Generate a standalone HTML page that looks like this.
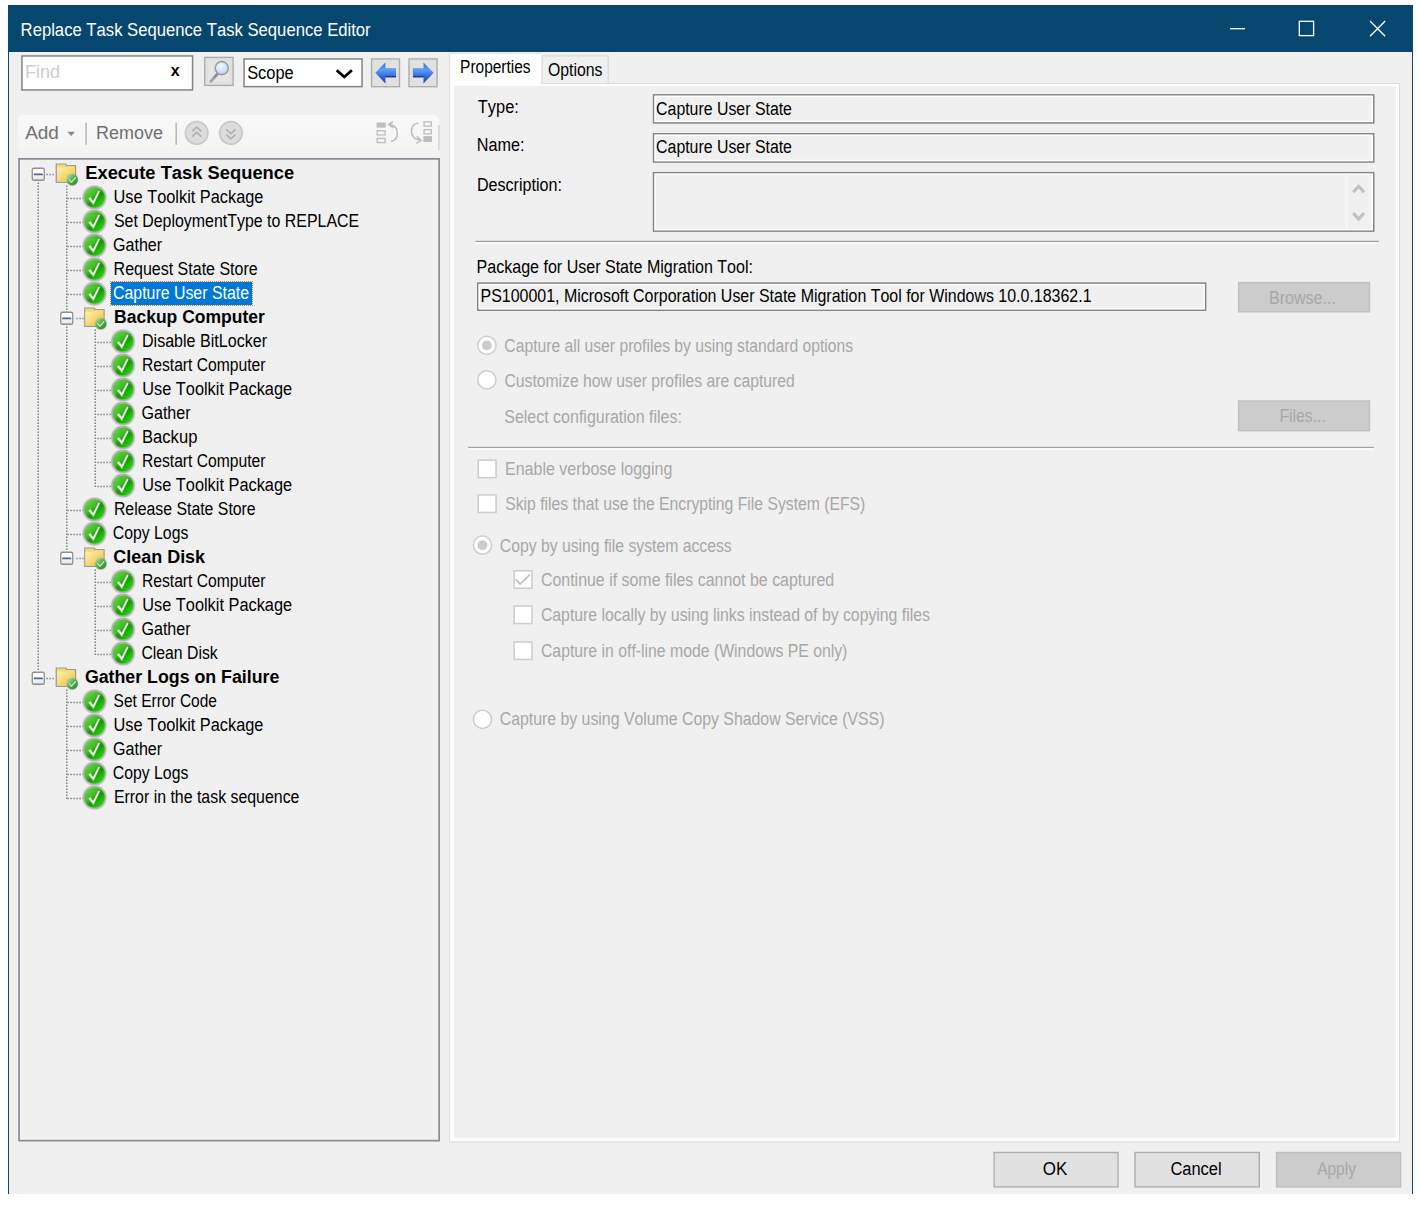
<!DOCTYPE html>
<html><head><meta charset="utf-8"><title>Replace Task Sequence Task Sequence Editor</title>
<style>
*{box-sizing:border-box;margin:0;padding:0}
html,body{width:1420px;height:1207px;background:#fff;overflow:hidden}
body{font-family:"Liberation Sans",sans-serif;font-size:17px;color:#000;position:relative}
.abs,.t,.ck,.dv,.dh,.sel{position:absolute}
.t{left:0;top:0;white-space:nowrap;height:24px;line-height:24px;font-size:18px;transform-origin:0 0;font-kerning:none}
.t.b{font-weight:bold}
.t.w{color:#fff}
.t.d{color:#a7a7a7}
.t.f{color:#cdcdcd}
.t.g{color:#707070}
#win{position:absolute;left:8px;top:5px;width:1405px;height:1189px;background:#f0f0f0;border-left:1px solid #0b4570;border-right:1px solid #0b4570}
#title{position:absolute;left:8px;top:5px;width:1405px;height:47px;background:#06466f}
.dv{width:2px;background:repeating-linear-gradient(to bottom,rgba(105,105,105,.64) 0,rgba(105,105,105,.64) 2px,transparent 2px,transparent 3px)}
.dh{height:2px;background:repeating-linear-gradient(to right,rgba(105,105,105,.64) 0,rgba(105,105,105,.64) 2px,transparent 2px,transparent 3px)}
.sel{background:#0078d7}
#ov{position:absolute;left:0;top:0}
</style></head><body>
<svg width="0" height="0" style="position:absolute">
<defs>
<linearGradient id="gg" x1="0.1" y1="0.1" x2="0.9" y2="0.9"><stop offset="0" stop-color="#5fd83c"/><stop offset=".38" stop-color="#43ba28"/><stop offset=".56" stop-color="#18930a"/><stop offset=".78" stop-color="#1dc004"/><stop offset="1" stop-color="#2ad808"/></linearGradient>
<linearGradient id="gg2" x1="0.1" y1="0.1" x2="0.9" y2="0.9"><stop offset="0" stop-color="#9ee09a"/><stop offset=".5" stop-color="#4daa4a"/><stop offset="1" stop-color="#2f8f2f"/></linearGradient>
<linearGradient id="fg" x1="0" y1="0" x2="1" y2="1"><stop offset="0" stop-color="#fbf3b4"/><stop offset=".45" stop-color="#f6de80"/><stop offset="1" stop-color="#edbb35"/></linearGradient>
<linearGradient id="ab" x1="0" y1="0" x2="0" y2="1"><stop offset="0" stop-color="#2f6ee0"/><stop offset=".35" stop-color="#5f9cf2"/><stop offset=".7" stop-color="#2a66d6"/><stop offset="1" stop-color="#1a44b0"/></linearGradient>
<linearGradient id="eb" x1="0" y1="0" x2="0" y2="1"><stop offset=".4" stop-color="#fff"/><stop offset="1" stop-color="#e2e2e2"/></linearGradient>
<radialGradient id="mg" cx="40%" cy="35%" r="70%"><stop offset="0" stop-color="#f4f9ff"/><stop offset=".6" stop-color="#cfe1f7"/><stop offset="1" stop-color="#bcd3f0"/></radialGradient>
<linearGradient id="tb" x1="0" y1="0" x2="0" y2="1"><stop offset="0" stop-color="#f8f8f8"/><stop offset=".75" stop-color="#f4f4f4"/><stop offset="1" stop-color="#f0f0f0"/></linearGradient>
<g id="ckI"><circle cx="12" cy="12" r="12.2" fill="#c6c6c6"/><circle cx="12" cy="12" r="11.4" fill="#b4b4b4"/><circle cx="12" cy="12" r="10.2" fill="url(#gg)"/><path d="M6.1 13.3 L7.9 11.9 L10.5 15.700 L16.1 5.300 L17.2 5.900 L10.9 19 Z" fill="#eff2ed" stroke="#eff2ed" stroke-width=".45" stroke-linejoin="round"/></g>
<g id="fdI"><path d="M.9 1.3 H10.5 L11 2.9 H20.100 V19.6 H.9 Z" fill="#f3d66e" stroke="#9f9b90" stroke-width="1.35"/><path d="M1.5 4.600 H10.6 L11.2 3.5 H19.5 V19 H1.5 Z" fill="url(#fg)"/><path d="M1.5 1.9 H10 V3.600 H1.5Z" fill="#f7dc6e"/><circle cx="16.9" cy="17" r="6.3" fill="#8c8c8c" fill-opacity=".3"/><circle cx="16.9" cy="17" r="5.6" fill="url(#gg2)"/><path d="M13.9 17.100 L16 19.3 L20 14.800" fill="none" stroke="#cfeacc" stroke-width="1.35" stroke-linecap="round" stroke-linejoin="round"/></g>
<g id="exI"><rect x=".65" y=".65" width="12" height="12" rx="1.6" fill="url(#eb)" stroke="#8e8e8e" stroke-width="1.3"/><path d="M2.900 6.800 H10.400" stroke="#4a62b0" stroke-width="1.8" stroke-linecap="round"/></g>
</defs></svg>

<div id="win"></div>
<div id="title"></div>
<!--WL-->
<!-- fills -->
<div class="abs" style="left:18px;top:115px;width:421px;height:43px;background:linear-gradient(#f8f8f8,#f5f5f5 70%,#f1f1f1);border-radius:5px 5px 0 0"></div>
<div class="abs" style="left:450px;top:83px;width:949px;height:1058px;background:#fff"></div>
<div class="abs" style="left:450px;top:53px;width:92px;height:33px;background:#fff"></div>
<div class="abs" style="left:454px;top:86px;width:942px;height:1052px;background:#f0f0f0"></div>
<div class="abs" style="left:542px;top:56px;width:67px;height:27px;background:#f0f0f0"></div>
<div class="abs" style="left:22px;top:56px;width:171px;height:34px;background:#fff"></div>
<div class="abs" style="left:244px;top:59px;width:118px;height:28px;background:#fff"></div>
<div class="sel" style="left:111px;top:282px;width:141px;height:23px;outline:1px dotted #c9822f;outline-offset:0"></div>

<svg id="ov" width="1420" height="1207" viewBox="0 0 1420 1207">
<g stroke="#fff" fill="none" stroke-width="1.3"><path d="M1230 28.7 H1245"/><rect x="1299.3" y="21.3" width="14.3" height="14.3"/><path d="M1370 21 L1385.200 36.200 M1385.200 21 L1370 36.200"/></g>
<rect x="21.95" y="55.95" width="170.6" height="34" fill="none" stroke="#858585" stroke-width="1.5"/>
<rect x="244.05" y="58.95" width="118" height="27.7" fill="none" stroke="#858585" stroke-width="1.5"/>
<path d="M336.700 70.300 L344.300 77 L351.900 70.300" fill="none" stroke="#000" stroke-width="2.8"/>
<rect x="204.7" y="57.4" width="28.4" height="28" fill="#e1e1e1" stroke="#adadad" stroke-width="1.4"/>
<rect x="208.800" y="61.100" width="20.600" height="20.600" fill="#e6e6e6"/>
<path d="M210.900 81.200 L217.400 74" stroke="#a4a4a4" stroke-width="3" stroke-linecap="round"/><path d="M214.500 77.200 L217.800 73.600" stroke="#8f8f8f" stroke-width="2" stroke-linecap="round"/>
<circle cx="221.800" cy="68.100" r="6.600" fill="url(#mg)" stroke="#9c9c9c" stroke-width="1.5"/>
<rect x="371.6" y="58.9" width="27.9" height="27.8" fill="#e1e1e1" stroke="#adadad" stroke-width="1.4"/>
<rect x="409" y="58.9" width="28.1" height="27.8" fill="#e1e1e1" stroke="#adadad" stroke-width="1.4"/>
<path d="M375.300 72.800 L385.400 62.500 V68.200 H396 V77.200 H385.400 V83.400 Z" fill="url(#ab)"/><path d="M385.400 76.700 H396" stroke="#16347e" stroke-width="1.2"/>
<path d="M433.600 72.800 L423.500 62.500 V68.200 H412.900 V77.200 H423.500 V83.400 Z" fill="url(#ab)"/><path d="M412.900 76.700 H423.500" stroke="#16347e" stroke-width="1.2"/>
<path d="M67.300 131.700 H75 L71.150 136.100 Z" fill="#8a8a8a"/>
<path d="M86.100 122.800 V144.800 M176.200 122.800 V144.800" stroke="#b6b6b6" stroke-width="1.5"/>
<circle cx="196.7" cy="132.900" r="11.300" fill="#dcdcdc" stroke="#c6c6c6" stroke-width="1.5"/>
<path d="M192.1 131.400 l4.600 -4.200 l4.600 4.200 M192.1 136.600 l4.600 -4.200 l4.600 4.200" fill="none" stroke="#b0b0b0" stroke-width="1.6"/>
<circle cx="230.9" cy="132.900" r="11.300" fill="#dcdcdc" stroke="#c6c6c6" stroke-width="1.5"/>
<path d="M226.3 129.400 l4.600 4.200 l4.600 -4.200 M226.3 134.600 l4.600 4.200 l4.600 -4.200" fill="none" stroke="#b0b0b0" stroke-width="1.6"/>
<g fill="none" stroke="#bdbdbd" stroke-width="1.3"><rect x="377.200" y="123.200" width="7.900" height="3.800" fill="#bdbdbd"/><rect x="377.200" y="130.800" width="7.900" height="4.200"/><rect x="377.200" y="138.400" width="7.900" height="4.200"/><path d="M391 141.200 q6.300 -0.500 6.300 -8.500 q0 -7 -8 -8.200 M392.800 121.600 l-4.200 3 l4.600 3.200" stroke-width="1.5"/><rect x="424" y="121.900" width="7.300" height="4.200"/><rect x="424" y="129.700" width="7.300" height="4.200"/><rect x="424" y="136.800" width="7.300" height="4.500" fill="#bdbdbd"/><path d="M418.300 122.900 q-6.800 .8 -6.800 8.500 q0 6.800 8 8.600 M416.800 136.400 l4.200 3.900 l-4.500 3" stroke-width="1.5"/></g>
<path d="M438.900 125 V150" stroke="#cfcfcf" stroke-width="1.3"/>
<rect x="19.05" y="158.85" width="420.1" height="981.8" fill="none" stroke="#878c96" stroke-width="1.7"/>
<path d="M541.600 83.500 H1399.500 V1142 H449.600 V53.300 H541.400" fill="none" stroke="#dcdcdc" stroke-width="1"/>
<path d="M542 83 V55.900 H608.200 V83" fill="none" stroke="#d9d9d9" stroke-width="1.2"/>
<rect x="653.6" y="94.9" width="720.1" height="28" fill="#f0f0f0" stroke="#868686" stroke-width="1.6"/><rect x="655.1" y="96.4" width="717.1" height="25" fill="none" stroke="#fff" stroke-width="1.4"/>
<rect x="653.6" y="133.8" width="720.1" height="28.2" fill="#f0f0f0" stroke="#868686" stroke-width="1.6"/><rect x="655.1" y="135.3" width="717.1" height="25.2" fill="none" stroke="#fff" stroke-width="1.4"/>
<rect x="653.6" y="172.7" width="720.1" height="58.4" fill="#f0f0f0" stroke="#868686" stroke-width="1.6"/><rect x="655.1" y="174.2" width="717.1" height="55.4" fill="none" stroke="#fff" stroke-width="1.4"/>
<path d="M1346.700 175 V229" stroke="#fbfbfb" stroke-width="1.2"/>
<path d="M1353.300 192.300 L1358.600 186.300 L1364 192.300 M1353.300 213.100 L1358.600 219.100 L1364 213.100" fill="none" stroke="#c1c1c1" stroke-width="3.200"/>
<path d="M475.5 241.4 H1378.8" stroke="#a2a2a2" stroke-width="1.5"/><path d="M475.5 242.9 H1378.8" stroke="#fff" stroke-width="1.5"/>
<rect x="477.8" y="283.1" width="727.8" height="27.1" fill="#f0f0f0" stroke="#868686" stroke-width="1.6"/><rect x="479.3" y="284.6" width="724.8" height="24.1" fill="none" stroke="#fff" stroke-width="1.4"/>
<rect x="1238.6" y="282.6" width="130.9" height="29.2" fill="#cccccc" stroke="#bfbfbf" stroke-width="1.4"/>
<rect x="1238.6" y="401" width="130.9" height="29.7" fill="#cccccc" stroke="#bfbfbf" stroke-width="1.4"/>
<path d="M468 447.4 H1373.8" stroke="#a2a2a2" stroke-width="1.5"/><path d="M468 448.9 H1373.8" stroke="#fff" stroke-width="1.5"/>
<circle cx="486.9" cy="345.4" r="9.1" fill="#fff" stroke="#cdcdcd" stroke-width="1.5"/><circle cx="486.9" cy="345.4" r="4.9" fill="#cbcbcb"/>
<circle cx="486.9" cy="379.9" r="9.1" fill="#fff" stroke="#cdcdcd" stroke-width="1.5"/>
<rect x="478.25" y="460.15" width="17.8" height="17.5" fill="#fff" stroke="#cccccc" stroke-width="1.5"/>
<rect x="478.25" y="494.95" width="17.8" height="17.5" fill="#fff" stroke="#cccccc" stroke-width="1.5"/>
<circle cx="482.5" cy="545.2" r="9.1" fill="#fff" stroke="#cdcdcd" stroke-width="1.5"/><circle cx="482.5" cy="545.2" r="4.9" fill="#cbcbcb"/>
<circle cx="482.5" cy="719.4" r="9.1" fill="#fff" stroke="#cdcdcd" stroke-width="1.5"/>
<rect x="514.15" y="570.75" width="17.8" height="17.5" fill="#fff" stroke="#cccccc" stroke-width="1.5"/><path d="M515.9 579.2 L520.1 584.1 L529.8 574.6" fill="none" stroke="#bdbdbd" stroke-width="1.6"/>
<rect x="514.15" y="606.05" width="17.8" height="17.5" fill="#fff" stroke="#cccccc" stroke-width="1.5"/>
<rect x="514.15" y="641.95" width="17.8" height="17.5" fill="#fff" stroke="#cccccc" stroke-width="1.5"/>
<rect x="994.1" y="1152.5" width="123.9" height="34.4" fill="#e1e1e1" stroke="#adadad" stroke-width="1.4"/>
<rect x="1135" y="1152.5" width="124.3" height="34.4" fill="#e1e1e1" stroke="#adadad" stroke-width="1.4"/>
<rect x="1276.5" y="1152.5" width="124.1" height="34.4" fill="#cccccc" stroke="#bfbfbf" stroke-width="1.4"/>
<path d="M38.25 182.4 V671.4" stroke="#6f6f6f" stroke-opacity=".85" stroke-width="1.5" stroke-dasharray="1.5 1.5" stroke-dashoffset="2.95"/>
<path d="M66.75 185.4 V551.4" stroke="#6f6f6f" stroke-opacity=".85" stroke-width="1.5" stroke-dasharray="1.5 1.5" stroke-dashoffset="2.95"/>
<path d="M95.25 329.4 V487.2" stroke="#6f6f6f" stroke-opacity=".85" stroke-width="1.5" stroke-dasharray="1.5 1.5" stroke-dashoffset="2.95"/>
<path d="M95.25 569.4 V655.2" stroke="#6f6f6f" stroke-opacity=".85" stroke-width="1.5" stroke-dasharray="1.5 1.5" stroke-dashoffset="2.95"/>
<path d="M66.75 689.4 V799.2" stroke="#6f6f6f" stroke-opacity=".85" stroke-width="1.5" stroke-dasharray="1.5 1.5" stroke-dashoffset="2.95"/>
<path d="M46.3 174.4 H55.2" stroke="#6f6f6f" stroke-opacity=".85" stroke-width="1.5" stroke-dasharray="1.5 1.5" stroke-dashoffset="2.95"/>
<use href="#exI" x="31.6" y="167.6"/>
<use href="#fdI" x="55.4" y="162.8"/>
<path d="M67.5 198.4 H83.35" stroke="#6f6f6f" stroke-opacity=".85" stroke-width="1.5" stroke-dasharray="1.5 1.5" stroke-dashoffset="0.15"/>
<use href="#ckI" x="82.55" y="185.5"/>
<path d="M67.5 222.4 H83.35" stroke="#6f6f6f" stroke-opacity=".85" stroke-width="1.5" stroke-dasharray="1.5 1.5" stroke-dashoffset="0.15"/>
<use href="#ckI" x="82.55" y="209.5"/>
<path d="M67.5 246.4 H83.35" stroke="#6f6f6f" stroke-opacity=".85" stroke-width="1.5" stroke-dasharray="1.5 1.5" stroke-dashoffset="0.15"/>
<use href="#ckI" x="82.55" y="233.5"/>
<path d="M67.5 270.4 H83.35" stroke="#6f6f6f" stroke-opacity=".85" stroke-width="1.5" stroke-dasharray="1.5 1.5" stroke-dashoffset="0.15"/>
<use href="#ckI" x="82.55" y="257.5"/>
<path d="M67.5 294.4 H83.35" stroke="#6f6f6f" stroke-opacity=".85" stroke-width="1.5" stroke-dasharray="1.5 1.5" stroke-dashoffset="0.15"/>
<use href="#ckI" x="82.55" y="281.5"/>
<path d="M74.8 318.4 H83.7" stroke="#6f6f6f" stroke-opacity=".85" stroke-width="1.5" stroke-dasharray="1.5 1.5" stroke-dashoffset="1.45"/>
<use href="#exI" x="60.1" y="311.6"/>
<use href="#fdI" x="83.9" y="306.8"/>
<path d="M96 342.4 H111.85" stroke="#6f6f6f" stroke-opacity=".85" stroke-width="1.5" stroke-dasharray="1.5 1.5" stroke-dashoffset="1.65"/>
<use href="#ckI" x="111.05" y="329.5"/>
<path d="M96 366.4 H111.85" stroke="#6f6f6f" stroke-opacity=".85" stroke-width="1.5" stroke-dasharray="1.5 1.5" stroke-dashoffset="1.65"/>
<use href="#ckI" x="111.05" y="353.5"/>
<path d="M96 390.4 H111.85" stroke="#6f6f6f" stroke-opacity=".85" stroke-width="1.5" stroke-dasharray="1.5 1.5" stroke-dashoffset="1.65"/>
<use href="#ckI" x="111.05" y="377.5"/>
<path d="M96 414.4 H111.85" stroke="#6f6f6f" stroke-opacity=".85" stroke-width="1.5" stroke-dasharray="1.5 1.5" stroke-dashoffset="1.65"/>
<use href="#ckI" x="111.05" y="401.5"/>
<path d="M96 438.4 H111.85" stroke="#6f6f6f" stroke-opacity=".85" stroke-width="1.5" stroke-dasharray="1.5 1.5" stroke-dashoffset="1.65"/>
<use href="#ckI" x="111.05" y="425.5"/>
<path d="M96 462.4 H111.85" stroke="#6f6f6f" stroke-opacity=".85" stroke-width="1.5" stroke-dasharray="1.5 1.5" stroke-dashoffset="1.65"/>
<use href="#ckI" x="111.05" y="449.5"/>
<path d="M96 486.4 H111.85" stroke="#6f6f6f" stroke-opacity=".85" stroke-width="1.5" stroke-dasharray="1.5 1.5" stroke-dashoffset="1.65"/>
<use href="#ckI" x="111.05" y="473.5"/>
<path d="M67.5 510.4 H83.35" stroke="#6f6f6f" stroke-opacity=".85" stroke-width="1.5" stroke-dasharray="1.5 1.5" stroke-dashoffset="0.15"/>
<use href="#ckI" x="82.55" y="497.5"/>
<path d="M67.5 534.4 H83.35" stroke="#6f6f6f" stroke-opacity=".85" stroke-width="1.5" stroke-dasharray="1.5 1.5" stroke-dashoffset="0.15"/>
<use href="#ckI" x="82.55" y="521.5"/>
<path d="M74.8 558.4 H83.7" stroke="#6f6f6f" stroke-opacity=".85" stroke-width="1.5" stroke-dasharray="1.5 1.5" stroke-dashoffset="1.45"/>
<use href="#exI" x="60.1" y="551.6"/>
<use href="#fdI" x="83.9" y="546.8"/>
<path d="M96 582.4 H111.85" stroke="#6f6f6f" stroke-opacity=".85" stroke-width="1.5" stroke-dasharray="1.5 1.5" stroke-dashoffset="1.65"/>
<use href="#ckI" x="111.05" y="569.5"/>
<path d="M96 606.4 H111.85" stroke="#6f6f6f" stroke-opacity=".85" stroke-width="1.5" stroke-dasharray="1.5 1.5" stroke-dashoffset="1.65"/>
<use href="#ckI" x="111.05" y="593.5"/>
<path d="M96 630.4 H111.85" stroke="#6f6f6f" stroke-opacity=".85" stroke-width="1.5" stroke-dasharray="1.5 1.5" stroke-dashoffset="1.65"/>
<use href="#ckI" x="111.05" y="617.5"/>
<path d="M96 654.4 H111.85" stroke="#6f6f6f" stroke-opacity=".85" stroke-width="1.5" stroke-dasharray="1.5 1.5" stroke-dashoffset="1.65"/>
<use href="#ckI" x="111.05" y="641.5"/>
<path d="M46.3 678.4 H55.2" stroke="#6f6f6f" stroke-opacity=".85" stroke-width="1.5" stroke-dasharray="1.5 1.5" stroke-dashoffset="2.95"/>
<use href="#exI" x="31.6" y="671.6"/>
<use href="#fdI" x="55.4" y="666.8"/>
<path d="M67.5 702.4 H83.35" stroke="#6f6f6f" stroke-opacity=".85" stroke-width="1.5" stroke-dasharray="1.5 1.5" stroke-dashoffset="0.15"/>
<use href="#ckI" x="82.55" y="689.5"/>
<path d="M67.5 726.4 H83.35" stroke="#6f6f6f" stroke-opacity=".85" stroke-width="1.5" stroke-dasharray="1.5 1.5" stroke-dashoffset="0.15"/>
<use href="#ckI" x="82.55" y="713.5"/>
<path d="M67.5 750.4 H83.35" stroke="#6f6f6f" stroke-opacity=".85" stroke-width="1.5" stroke-dasharray="1.5 1.5" stroke-dashoffset="0.15"/>
<use href="#ckI" x="82.55" y="737.5"/>
<path d="M67.5 774.4 H83.35" stroke="#6f6f6f" stroke-opacity=".85" stroke-width="1.5" stroke-dasharray="1.5 1.5" stroke-dashoffset="0.15"/>
<use href="#ckI" x="82.55" y="761.5"/>
<path d="M67.5 798.4 H83.35" stroke="#6f6f6f" stroke-opacity=".85" stroke-width="1.5" stroke-dasharray="1.5 1.5" stroke-dashoffset="0.15"/>
<use href="#ckI" x="82.55" y="785.5"/>
</svg>

<div class="t b" style="transform:translate(85.20px,160.70px) scaleX(1.0190)">Execute Task Sequence</div>
<div class="t" style="transform:translate(113.56px,184.70px) scaleX(0.9081)">Use Toolkit Package</div>
<div class="t" style="transform:translate(113.92px,208.70px) scaleX(0.8848)">Set DeploymentType to REPLACE</div>
<div class="t" style="transform:translate(113.05px,232.70px) scaleX(0.8915)">Gather</div>
<div class="t" style="transform:translate(113.58px,256.70px) scaleX(0.8889)">Request State Store</div>
<div class="t w" style="transform:translate(113.03px,280.70px) scaleX(0.8823)">Capture User State</div>
<div class="t b" style="transform:translate(114.04px,304.70px) scaleX(0.9728)">Backup Computer</div>
<div class="t" style="transform:translate(141.98px,328.70px) scaleX(0.8925)">Disable BitLocker</div>
<div class="t" style="transform:translate(141.94px,352.70px) scaleX(0.8698)">Restart Computer</div>
<div class="t" style="transform:translate(142.19px,376.70px) scaleX(0.9083)">Use Toolkit Package</div>
<div class="t" style="transform:translate(141.47px,400.70px) scaleX(0.8926)">Gather</div>
<div class="t" style="transform:translate(141.94px,424.70px) scaleX(0.9232)">Backup</div>
<div class="t" style="transform:translate(141.94px,448.70px) scaleX(0.8698)">Restart Computer</div>
<div class="t" style="transform:translate(142.19px,472.70px) scaleX(0.9083)">Use Toolkit Package</div>
<div class="t" style="transform:translate(113.92px,496.70px) scaleX(0.8800)">Release State Store</div>
<div class="t" style="transform:translate(112.86px,520.70px) scaleX(0.8768)">Copy Logs</div>
<div class="t b" style="transform:translate(113.31px,544.70px) scaleX(0.9971)">Clean Disk</div>
<div class="t" style="transform:translate(141.94px,568.70px) scaleX(0.8698)">Restart Computer</div>
<div class="t" style="transform:translate(142.19px,592.70px) scaleX(0.9083)">Use Toolkit Package</div>
<div class="t" style="transform:translate(141.47px,616.70px) scaleX(0.8926)">Gather</div>
<div class="t" style="transform:translate(141.38px,640.70px) scaleX(0.8770)">Clean Disk</div>
<div class="t b" style="transform:translate(84.88px,664.70px) scaleX(0.9869)">Gather Logs on Failure</div>
<div class="t" style="transform:translate(113.59px,688.70px) scaleX(0.8608)">Set Error Code</div>
<div class="t" style="transform:translate(113.56px,712.70px) scaleX(0.9081)">Use Toolkit Package</div>
<div class="t" style="transform:translate(113.05px,736.70px) scaleX(0.8915)">Gather</div>
<div class="t" style="transform:translate(112.86px,760.70px) scaleX(0.8768)">Copy Logs</div>
<div class="t" style="transform:translate(113.90px,784.70px) scaleX(0.8830)">Error in the task sequence</div>
<div class="t w" style="transform:translate(20.61px,17.80px) scaleX(0.9255)">Replace Task Sequence Task Sequence Editor</div>
<div class="t f" style="transform:translate(25.03px,59.50px) scaleX(0.9987)">Find</div>
<div class="t" style="transform:translate(247.16px,60.70px) scaleX(0.9119)">Scope</div>
<div class="t g" style="transform:translate(25.19px,121.20px) scaleX(1.0529)">Add</div>
<div class="t g" style="transform:translate(96.11px,121.20px) scaleX(0.9988)">Remove</div>
<div class="t" style="transform:translate(460.08px,54.50px) scaleX(0.8596)">Properties</div>
<div class="t" style="transform:translate(547.91px,57.90px) scaleX(0.8786)">Options</div>
<div class="t" style="transform:translate(477.85px,95.40px) scaleX(0.9095)">Type:</div>
<div class="t" style="transform:translate(476.85px,132.80px) scaleX(0.8991)">Name:</div>
<div class="t" style="transform:translate(476.91px,172.80px) scaleX(0.8952)">Description:</div>
<div class="t" style="transform:translate(656.09px,96.60px) scaleX(0.8818)">Capture User State</div>
<div class="t" style="transform:translate(656.09px,135.40px) scaleX(0.8818)">Capture User State</div>
<div class="t" style="transform:translate(476.56px,254.50px) scaleX(0.8913)">Package for User State Migration Tool:</div>
<div class="t" style="transform:translate(480.55px,284.10px) scaleX(0.8863)">PS100001, Microsoft Corporation User State Migration Tool for Windows 10.0.18362.1</div>
<div class="t d" style="transform:translate(1268.90px,285.90px) scaleX(0.8935)">Browse...</div>
<div class="t d" style="transform:translate(1279.46px,404.40px) scaleX(0.8757)">Files...</div>
<div class="t d" style="transform:translate(504.37px,334.00px) scaleX(0.8712)">Capture all user profiles by using standard options</div>
<div class="t d" style="transform:translate(504.39px,368.50px) scaleX(0.8744)">Customize how user profiles are captured</div>
<div class="t d" style="transform:translate(504.26px,404.60px) scaleX(0.8879)">Select configuration files:</div>
<div class="t d" style="transform:translate(505.00px,457.00px) scaleX(0.8893)">Enable verbose logging</div>
<div class="t d" style="transform:translate(505.27px,491.60px) scaleX(0.8734)">Skip files that use the Encrypting File System (EFS)</div>
<div class="t d" style="transform:translate(499.77px,533.60px) scaleX(0.8750)">Copy by using file system access</div>
<div class="t d" style="transform:translate(540.93px,568.00px) scaleX(0.8853)">Continue if some files cannot be captured</div>
<div class="t d" style="transform:translate(540.93px,602.60px) scaleX(0.8775)">Capture locally by using links instead of by copying files</div>
<div class="t d" style="transform:translate(540.94px,638.60px) scaleX(0.8777)">Capture in off-line mode (Windows PE only)</div>
<div class="t d" style="transform:translate(499.74px,707.40px) scaleX(0.8799)">Capture by using Volume Copy Shadow Service (VSS)</div>
<div class="t" style="transform:translate(1042.86px,1157.20px) scaleX(0.9426)">OK</div>
<div class="t" style="transform:translate(1170.39px,1157.20px) scaleX(0.9152)">Cancel</div>
<div class="t d" style="transform:translate(1317.13px,1157.20px) scaleX(0.8625)">Apply</div>
<div class="t b" style="font-size:16px;transform:translate(170.7px,59.2px)">x</div>
</body></html>
